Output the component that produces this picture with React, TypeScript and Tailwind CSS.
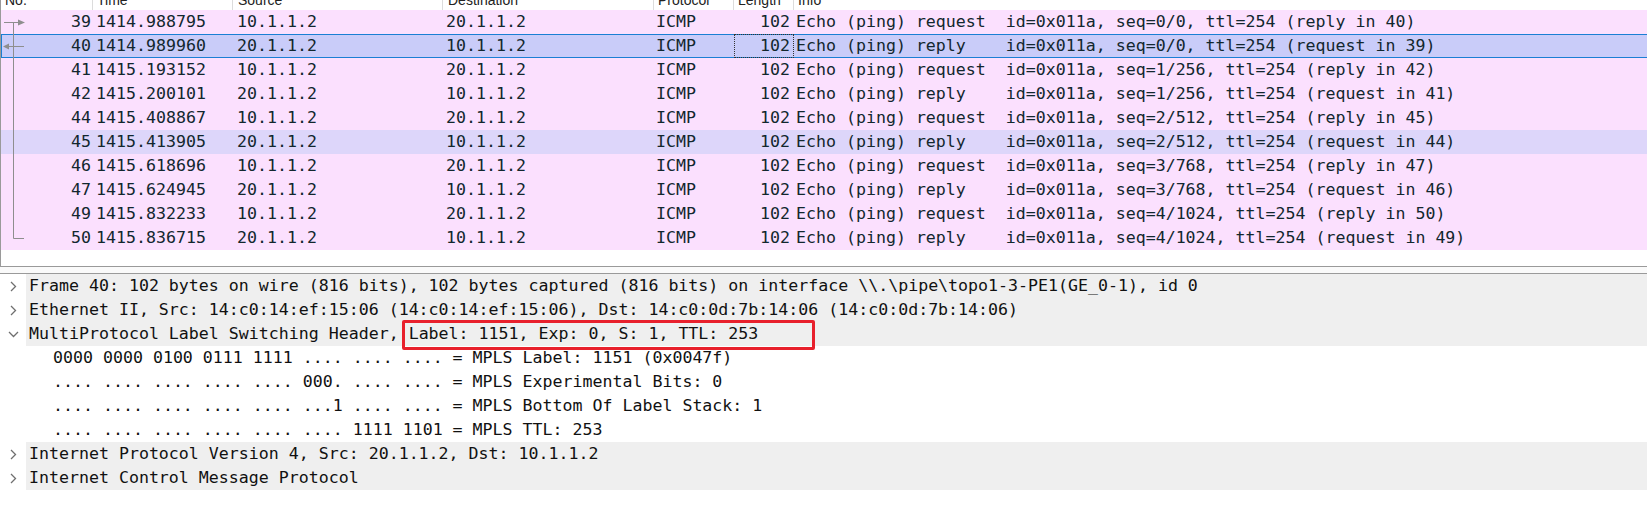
import React from "react";

const rows: [number, string, string, string, string][] = [
  [39, "1414.988795", "10.1.1.2", "20.1.1.2", "Echo (ping) request  id=0x011a, seq=0/0, ttl=254 (reply in 40)"],
  [40, "1414.989960", "20.1.1.2", "10.1.1.2", "Echo (ping) reply    id=0x011a, seq=0/0, ttl=254 (request in 39)"],
  [41, "1415.193152", "10.1.1.2", "20.1.1.2", "Echo (ping) request  id=0x011a, seq=1/256, ttl=254 (reply in 42)"],
  [42, "1415.200101", "20.1.1.2", "10.1.1.2", "Echo (ping) reply    id=0x011a, seq=1/256, ttl=254 (request in 41)"],
  [44, "1415.408867", "10.1.1.2", "20.1.1.2", "Echo (ping) request  id=0x011a, seq=2/512, ttl=254 (reply in 45)"],
  [45, "1415.413905", "20.1.1.2", "10.1.1.2", "Echo (ping) reply    id=0x011a, seq=2/512, ttl=254 (request in 44)"],
  [46, "1415.618696", "10.1.1.2", "20.1.1.2", "Echo (ping) request  id=0x011a, seq=3/768, ttl=254 (reply in 47)"],
  [47, "1415.624945", "20.1.1.2", "10.1.1.2", "Echo (ping) reply    id=0x011a, seq=3/768, ttl=254 (request in 46)"],
  [49, "1415.832233", "10.1.1.2", "20.1.1.2", "Echo (ping) request  id=0x011a, seq=4/1024, ttl=254 (reply in 50)"],
  [50, "1415.836715", "20.1.1.2", "10.1.1.2", "Echo (ping) reply    id=0x011a, seq=4/1024, ttl=254 (request in 49)"],
];

function TreeMark({ idx, total }: { idx: number; total: number }) {
  const c = "#8e8e8e";
  return (
    <svg className="absolute left-0 top-0" width="30" height="24" viewBox="0 0 30 24">
      {idx === 0 && (
        <>
          <line x1="3" y1="12.5" x2="18" y2="12.5" stroke={c} strokeWidth="1" />
          <polygon points="17,9.5 24,12.5 17,15.5" fill={c} />
          <line x1="12.5" y1="12.5" x2="12.5" y2="24" stroke={c} strokeWidth="1" />
        </>
      )}
      {idx === 1 && (
        <>
          <polygon points="2,12.5 8,9.5 8,15.5" fill={c} />
          <line x1="8" y1="12.5" x2="23" y2="12.5" stroke={c} strokeWidth="1" />
          <line x1="12.5" y1="0" x2="12.5" y2="24" stroke={c} strokeWidth="1" />
        </>
      )}
      {idx > 1 && idx < total - 1 && <line x1="12.5" y1="0" x2="12.5" y2="24" stroke={c} strokeWidth="1" />}
      {idx === total - 1 && (
        <>
          <line x1="12.5" y1="0" x2="12.5" y2="12.5" stroke={c} strokeWidth="1" />
          <line x1="12.5" y1="12.5" x2="23" y2="12.5" stroke={c} strokeWidth="1" />
        </>
      )}
    </svg>
  );
}

function Chevron({ open }: { open?: boolean }) {
  return (
    <svg width="26" height="24" viewBox="0 0 26 24" className="shrink-0">
      {open ? (
        <polyline points="9,10 13.5,14.5 18,10" fill="none" stroke="#6f6f6f" strokeWidth="1.3" />
      ) : (
        <polyline points="11,8 15.5,12.5 11,17" fill="none" stroke="#6f6f6f" strokeWidth="1.3" />
      )}
    </svg>
  );
}

export default function App() {
  const mono = "font-['DejaVu_Sans_Mono','Liberation_Mono',monospace] text-[16.6px] leading-[24px]";
  return (
    <div className="w-[1647px] h-[505px] bg-white overflow-hidden">
      {/* Packet list */}
      <div className="h-[267px] border-l border-b border-[#9a9a9a] flex flex-col">
        <div className="h-[10px] overflow-hidden flex font-['Liberation_Sans',sans-serif] text-[14px] leading-[14px] text-[#222]">
          <div className="w-[92px] pl-[4px] border-r border-[#dcdcdc]"><div className="mt-[-7px]">No.</div></div>
          <div className="w-[140px] pl-[4px] border-r border-[#dcdcdc]"><div className="mt-[-7px]">Time</div></div>
          <div className="w-[210px] pl-[5px] border-r border-[#dcdcdc]"><div className="mt-[-7px]">Source</div></div>
          <div className="w-[211px] pl-[5px] border-r border-[#dcdcdc]"><div className="mt-[-7px]">Destination</div></div>
          <div className="w-[80px] pl-[4px] border-r border-[#dcdcdc]"><div className="mt-[-7px]">Protocol</div></div>
          <div className="w-[60px] pl-[4px] border-r border-[#dcdcdc]"><div className="mt-[-7px]">Length</div></div>
          <div className="flex-1 pl-[4px]"><div className="mt-[-7px]">Info</div></div>
        </div>
        <div className={`${mono} text-[#12272e]`}>
          {rows.map((r, i) => {
            const sel = r[0] === 40;
            const rel = r[0] === 45;
            const bg = sel ? "bg-[#c9ccf9]" : rel ? "bg-[#ddd6fa]" : "bg-[#fbe0fe]";
            const edge = sel ? "shadow-[inset_0_1px_0_#1a7fd4,inset_0_-1px_0_#1a7fd4,inset_1px_0_0_#1a7fd4]" : "";
            return (
              <div key={r[0]} className={`h-[24px] flex whitespace-pre ${bg} ${edge}`}>
                <div className="relative w-[92px] text-right pr-[2px]">
                  <TreeMark idx={i} total={rows.length} />
                  <span className="relative">{r[0]}</span>
                </div>
                <div className="w-[140px] pl-[3px]">{r[1]}</div>
                <div className="w-[210px] pl-[4px]">{r[2]}</div>
                <div className="w-[211px] pl-[3px]">{r[3]}</div>
                <div className="w-[80px] pl-[2px]">ICMP</div>
                <div className={`w-[60px] text-right pr-[4px] ${sel ? "outline outline-1 outline-dotted outline-[#333] outline-offset-[-1px]" : ""}`}>102</div>
                <div className="flex-1 pl-[2px]">{r[4]}</div>
              </div>
            );
          })}
        </div>
      </div>

      {/* Splitter */}
      <div className="h-[6px] bg-[#fafafa]" />

      {/* Packet details */}
      <div className={`border-t border-[#9a9a9a] ${mono} text-[#111] whitespace-pre`}>
        <div className="h-[24px] flex">
          <Chevron />
          <div className="flex-1 bg-[#efefef] pl-[3px]">Frame 40: 102 bytes on wire (816 bits), 102 bytes captured (816 bits) on interface \\.\pipe\topo1-3-PE1(GE_0-1), id 0</div>
        </div>
        <div className="h-[24px] flex">
          <Chevron />
          <div className="flex-1 bg-[#efefef] pl-[3px]">Ethernet II, Src: 14:c0:14:ef:15:06 (14:c0:14:ef:15:06), Dst: 14:c0:0d:7b:14:06 (14:c0:0d:7b:14:06)</div>
        </div>
        <div className="h-[24px] flex">
          <Chevron open />
          <div className="flex-1 bg-[#efefef] pl-[3px]">
            MultiProtocol Label Switching Header,{" "}
            <span className="relative inline-block h-[24px]">
              Label: 1151, Exp: 0, S: 1, TTL: 253
              <span className="absolute left-[-7px] top-[-2px] w-[413px] h-[30px] border-[3px] border-[#e8202c] rounded-[2px]" />
            </span>
          </div>
        </div>
        <div className="h-[24px] pl-[53px]">0000 0000 0100 0111 1111 .... .... .... = MPLS Label: 1151 (0x0047f)</div>
        <div className="h-[24px] pl-[53px]">.... .... .... .... .... 000. .... .... = MPLS Experimental Bits: 0</div>
        <div className="h-[24px] pl-[53px]">.... .... .... .... .... ...1 .... .... = MPLS Bottom Of Label Stack: 1</div>
        <div className="h-[24px] pl-[53px]">.... .... .... .... .... .... 1111 1101 = MPLS TTL: 253</div>
        <div className="h-[24px] flex">
          <Chevron />
          <div className="flex-1 bg-[#efefef] pl-[3px]">Internet Protocol Version 4, Src: 20.1.1.2, Dst: 10.1.1.2</div>
        </div>
        <div className="h-[24px] flex">
          <Chevron />
          <div className="flex-1 bg-[#efefef] pl-[3px]">Internet Control Message Protocol</div>
        </div>
      </div>
    </div>
  );
}
